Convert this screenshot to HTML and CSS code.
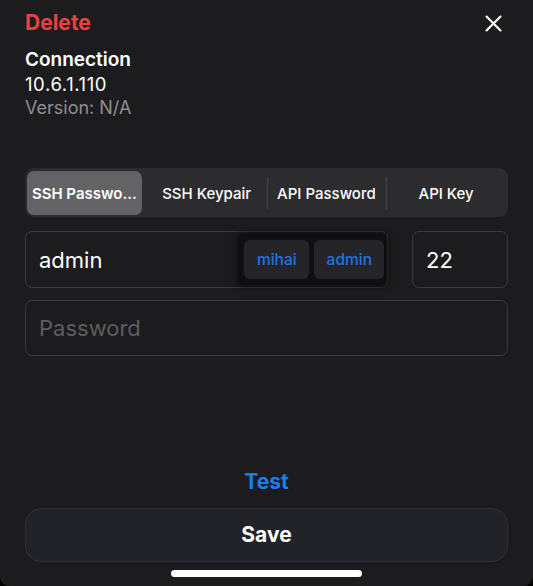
FILE: index.html
```html
<!DOCTYPE html>
<html>
<head>
<meta charset="utf-8">
<link rel="stylesheet" href="styles.css">
</head>
<body>
<div class="sheet">
  <div class="top-row">
    <span class="delete">Delete</span>
    <svg class="close" width="17" height="17" viewBox="0 0 17 17"><path d="M1.5 1.5 L15.5 15.5 M15.5 1.5 L1.5 15.5" stroke="#ffffff" stroke-width="2.1" stroke-linecap="round"/></svg>
  </div>
  <div class="info">
    <div class="title">Connection</div>
    <div class="host">10.6.1.110</div>
    <div class="version">Version: N/A</div>
  </div>
  <div class="segmented">
    <div class="seg selected">SSH Passwo...</div>
    <div class="seg">SSH Keypair</div>
    <div class="seg divided">API Password</div>
    <div class="seg divided">API Key</div>
  </div>
  <div class="field-row">
    <div class="field user">
      <span class="value">admin</span>
      <div class="chips">
        <span class="chip">mihai</span>
        <span class="chip">admin</span>
      </div>
    </div>
    <div class="field port"><span class="value">22</span></div>
  </div>
  <div class="field password"><span class="placeholder">Password</span></div>
  <div class="test">Test</div>
  <div class="save">Save</div>
  <div class="home-indicator"></div>
</div>
</body>
</html>
```
FILE: styles.css
```css
html, body {
  margin: 0;
  padding: 0;
  background: #000000;
}
body {
  width: 533px;
  height: 586px;
  overflow: hidden;
  font-family: Inter, "Noto Sans", sans-serif;
  color: #ffffff;
}
.sheet {
  box-sizing: border-box;
  height: 586px;
  background: #1c1c1e;
  border-radius: 0 0 9px 9px;
  padding: 9px 25px 9px;
  display: flex;
  flex-direction: column;
}
.top-row {
  display: flex;
  justify-content: space-between;
  align-items: center;
  height: 28px;
}
.delete {
  color: #ec4141;
  font-size: 21px;
  font-weight: 700;
  line-height: 28px;
}
.close {
  margin-right: 6px;
}
.info {
  margin-top: 11px;
  font-size: 18px;
  line-height: 24px;
}
.title {
  font-weight: 600;
  font-size: 19px;
}
.host {
  letter-spacing: 0.6px;
  font-size: 18.5px;
}
.version {
  color: #8e8e93;
}
.segmented {
  margin-top: 48px;
  height: 49px;
  box-sizing: border-box;
  background: #2c2c2f;
  border-radius: 9px;
  padding: 3px 2px 2px;
  display: grid;
  grid-template-columns: repeat(4, 1fr);
}
.seg {
  position: relative;
  display: flex;
  align-items: center;
  justify-content: center;
  font-size: 15px;
  font-weight: 500;
  white-space: nowrap;
}
.seg.selected {
  background: #636366;
  border-radius: 7px;
  font-weight: 600;
  margin-right: 5px;
}
.seg.divided::before {
  content: "";
  position: absolute;
  left: 0;
  top: 6px;
  bottom: 6px;
  width: 1px;
  background: #47474b;
}
.field-row {
  margin-top: 14px;
  display: flex;
  gap: 24px;
}
.field {
  box-sizing: border-box;
  border: 1px solid #39393c;
  border-radius: 7px;
  display: flex;
  align-items: center;
  font-size: 22px;
}
.user {
  flex: 1;
  height: 57px;
  padding: 0 3px 0 13px;
}
.user .value {
  flex: 1;
}
.port {
  width: 96px;
  height: 57px;
  padding-left: 13px;
}
.chips {
  display: flex;
  gap: 5px;
  padding: 4px 0 4px 3px;
  box-shadow: 0 0 8px 2px rgba(0, 0, 0, 0.85);
  background: #101012;
}
.chip {
  height: 39px;
  display: flex;
  align-items: center;
  padding: 0 12px 0 13px;
  background: #252529;
  border-radius: 6px;
  color: #1c74e2;
  font-size: 15.5px;
  font-weight: 500;
}
.password {
  margin-top: 12px;
  height: 56px;
  padding-left: 13px;
}
.placeholder {
  color: #5c5c60;
}
.test {
  margin-top: auto;
  text-align: center;
  color: #1a7ef0;
  font-size: 21px;
  font-weight: 700;
  line-height: 24px;
}
.save {
  margin-top: 14px;
  height: 54px;
  box-sizing: border-box;
  border: 1px solid #2f2f35;
  border-radius: 16px;
  background: #222229;
  display: flex;
  align-items: center;
  justify-content: center;
  padding-bottom: 2px;
  font-size: 21px;
  font-weight: 700;
}
.home-indicator {
  margin: 8px auto 0;
  width: 191px;
  height: 7px;
  border-radius: 4px;
  background: #ffffff;
}
```
